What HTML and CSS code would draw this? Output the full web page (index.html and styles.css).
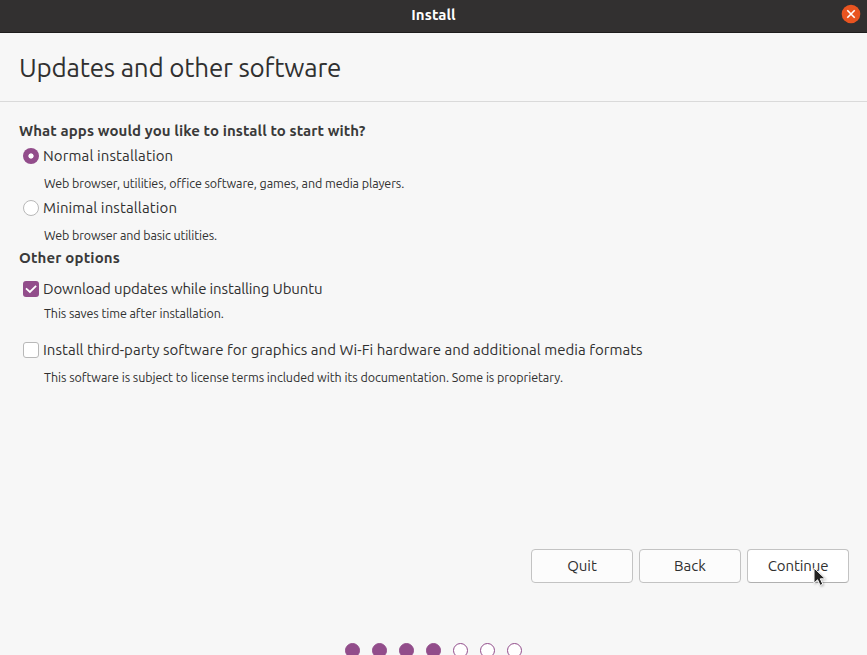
FILE: index.html
```html
<!DOCTYPE html>
<html lang="en">
<head>
<meta charset="utf-8">
<title>Install</title>
<link rel="stylesheet" href="styles.css">
</head>
<body>
<div class="window">
  <header class="titlebar">
    <span class="title">Install</span>
    <button class="close" aria-label="Close"><svg width="20" height="20" viewBox="0 0 20 20"><circle cx="10" cy="10" r="9.3" fill="#e95420"/><path d="M6.3 6.3l7.4 7.4M13.7 6.3l-7.4 7.4" stroke="#fff" stroke-width="1.6"/></svg></button>
  </header>
  <div class="heading"><h1>Updates and other software</h1></div>
  <main class="content">
    <h2 class="q-apps">What apps would you like to install to start with?</h2>
    <div class="option normal"><span class="radio checked"></span><span class="t-normal">Normal installation</span></div>
    <p class="d-normal">Web browser, utilities, office software, games, and media players.</p>
    <div class="option minimal"><span class="radio"></span><span class="t-minimal">Minimal installation</span></div>
    <p class="d-minimal">Web browser and basic utilities.</p>
    <h2 class="q-other">Other options</h2>
    <div class="option download"><span class="check checked"><svg width="16" height="16" viewBox="0 0 16 16"><path d="M3 7.4l3.9 3.6 6.2-6.2" fill="none" stroke="#fff" stroke-width="1.8"/></svg></span><span class="t-download">Download updates while installing Ubuntu</span></div>
    <p class="d-download">This saves time after installation.</p>
    <div class="option third"><span class="check"></span><span class="t-third">Install third-party software for graphics and Wi-Fi hardware and additional media formats</span></div>
    <p class="d-third">This software is subject to license terms included with its documentation. Some is proprietary.</p>
  </main>
  <div class="actions">
    <button class="btn">Quit</button>
    <button class="btn">Back</button>
    <button class="btn active"><span class="t-continue">Continue</span></button>
  </div>
  <div class="pages"><i class="dot on"></i><i class="dot on"></i><i class="dot on"></i><i class="dot on"></i><i class="dot"></i><i class="dot"></i><i class="dot"></i></div>
  <svg class="cursor" width="14" height="22" viewBox="0 0 14 22"><path d="M1 1v15.2l3.6-3.4 2.5 5.6 2.7-1.2-2.5-5.4h4.9z" fill="#222" stroke="#fff" stroke-width="1"/></svg>
</div>
</body>
</html>
```
FILE: styles.css
```css
* { box-sizing: border-box; }
body { margin: 0; overflow: hidden; background: #f7f7f7; color: #303030; font: 15px/20px Ubuntu, "Noto Sans", sans-serif; }
h1, h2, p { margin: 0; white-space: nowrap; }
button { font: inherit; color: inherit; padding: 0; }
.window { position: relative; height: 655px; display: flex; flex-direction: column; overflow: hidden; }
.titlebar { flex: none; height: 33px; padding: 0 6px 4px 26px; background: #323030; border-bottom: 1px solid #1e1d1d; display: grid; grid-template-columns: 1fr 20px; align-items: center; color: #fff; }
.title { padding-top: 1px; text-align: center; font-weight: 700; font-size: 15px; letter-spacing: .1px; }
.close { width: 20px; height: 20px; border: 0; background: none; }
.close svg { display: block; }
.heading { flex: none; height: 69px; padding: 17px 19px 0; border-bottom: 1px solid #dadada; }
h1 { font-size: 26px; line-height: 36px; font-weight: 400; letter-spacing: -.2px; }
h2 { font-size: 15px; line-height: 20px; font-weight: 700; letter-spacing: .09px; color: #3a3a3a; }
.content { flex: 1; padding: 19px 19px 0; }
.content p { margin-left: 25px; font-size: 12.5px; line-height: 19px; letter-spacing: -.095px; }
.option { display: flex; align-items: center; gap: 4px; padding-left: 4px; height: 20px; white-space: nowrap; }
.normal { margin-top: 5px; }
.content .d-normal, .content .d-minimal, .content .d-third { margin-top: 8px; }
.content .d-minimal { letter-spacing: -.12px; }
.content .d-third { letter-spacing: -.055px; }
.minimal { margin-top: 5px; }
.content .q-other { margin-top: 3px; letter-spacing: .16px; }
.download { margin-top: 11px; }
.content .d-download { margin-top: 5px; }
.third { margin-top: 17px; }
.t-normal, .t-minimal { letter-spacing: .12px; }
.t-download { letter-spacing: -.13px; }
.t-third { letter-spacing: .03px; }
.t-continue { letter-spacing: -.1px; }
.radio, .check { flex: none; width: 16px; height: 16px; border: 1px solid #b8b8b8; background: #fff; }
.radio { border-radius: 50%; }
.radio.checked { border: 0; background: radial-gradient(circle, #fff 2.2px, #924d8b 3px); }
.check { border-radius: 3px; }
.check.checked { border: 0; background: #924d8b; }
.check svg { display: block; }
.actions { flex: none; display: flex; justify-content: flex-end; gap: 6px; padding-right: 18px; margin-bottom: 60px; }
.btn { width: 102px; height: 34px; border: 1px solid #c3c3c3; border-radius: 4px; background: #fcfcfc; }
.btn.active { background: #fff; border-bottom-color: #b0b0b0; }
.pages { flex: none; height: 12px; display: flex; justify-content: center; gap: 12px; }
.dot { flex: none; width: 15px; height: 15px; border: 1px solid #924d8b; border-radius: 50%; background: #fff; }
.dot.on { background: #924d8b; }
.cursor { position: absolute; left: 813px; top: 567px; filter: drop-shadow(1px 1px 1px rgba(0, 0, 0, .25)); }
```
